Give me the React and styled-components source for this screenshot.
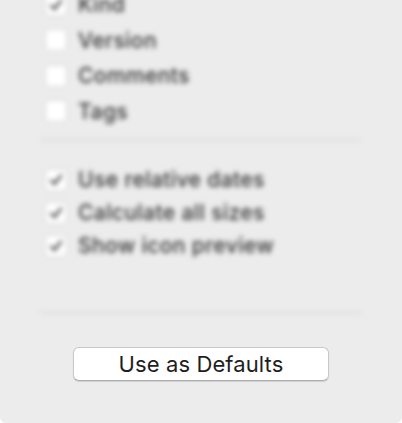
import React from "react";
import styled, { createGlobalStyle } from "styled-components";

const GlobalStyle = createGlobalStyle`
  html, body {
    margin: 0;
    padding: 0;
    background: #ffffff;
  }
  body {
    font-family: Inter, "Liberation Sans", sans-serif;
  }
`;

const Panel = styled.div`
  width: 402px;
  height: 423px;
  background: #ececec;
  border-radius: 0 0 6px 6px;
  overflow: hidden;
  display: flex;
  flex-direction: column;
`;

// everything above the button is out of focus in the screenshot
const Blurred = styled.div`
  filter: blur(2.4px);
  padding: 0 40px;
  margin-top: -13px;
`;

const Group = styled.div`
  display: flex;
  flex-direction: column;
  padding: ${(props) => props.$pad || "0"};
`;

const Row = styled.div`
  display: flex;
  align-items: center;
  height: ${(props) => props.$h || 35.5}px;
  padding-left: 5px;
  gap: 11px;
`;

const Box = styled.div`
  width: 22px;
  height: 22px;
  border-radius: 4px;
  background: #ffffff;
  border: 1px solid #d4d4d4;
  box-sizing: border-box;
  display: flex;
  align-items: center;
  justify-content: center;
  flex-shrink: 0;
`;

const Label = styled.span`
  font-size: 21px;
  font-weight: 500;
  color: #333333;
  letter-spacing: 0.4px;
`;

const Divider = styled.div`
  height: 2px;
  background: #dcdcdc;
  margin: ${(props) => props.$m || "0"};
`;

const Footer = styled.div`
  display: flex;
  justify-content: center;
  padding-top: 33px;
`;

const Button = styled.button`
  width: 256px;
  height: 34px;
  background: #ffffff;
  border: 1px solid #c8c8c8;
  border-bottom-color: #acacac;
  border-radius: 6px;
  box-shadow: 0 1px 1px rgba(0, 0, 0, 0.12);
  font-family: Inter, "Liberation Sans", sans-serif;
  font-size: 22px;
  letter-spacing: 0.1px;
  color: #1e1e1e;
  padding: 0;
  display: flex;
  align-items: center;
  justify-content: center;
`;

const Check = () => (
  <svg width="16" height="16" viewBox="0 0 16 16">
    <path d="M3 8.5 L6.5 12 L13 3.5" fill="none" stroke="#3a3a3a" strokeWidth="2.2" strokeLinecap="round" strokeLinejoin="round" />
  </svg>
);

const Option = ({ label, checked, h }) => (
  <Row $h={h}>
    <Box>{checked && <Check />}</Box>
    <Label>{label}</Label>
  </Row>
);

const App = () => {
  return (
    <>
      <GlobalStyle />
      <Panel>
        <Blurred>
          <Group>
            <Option label="Kind" checked />
            <Option label="Version" />
            <Option label="Comments" />
            <Option label="Tags" />
          </Group>
          <Divider $m="10px 0 0" />
          <Group $pad="22px 0 0">
            <Option label="Use relative dates" checked h={33} />
            <Option label="Calculate all sizes" checked h={33} />
            <Option label="Show icon preview" checked h={33} />
          </Group>
          <Divider $m="50px 0 0" />
        </Blurred>
        <Footer>
          <Button>Use as Defaults</Button>
        </Footer>
      </Panel>
    </>
  );
};

export default App;
